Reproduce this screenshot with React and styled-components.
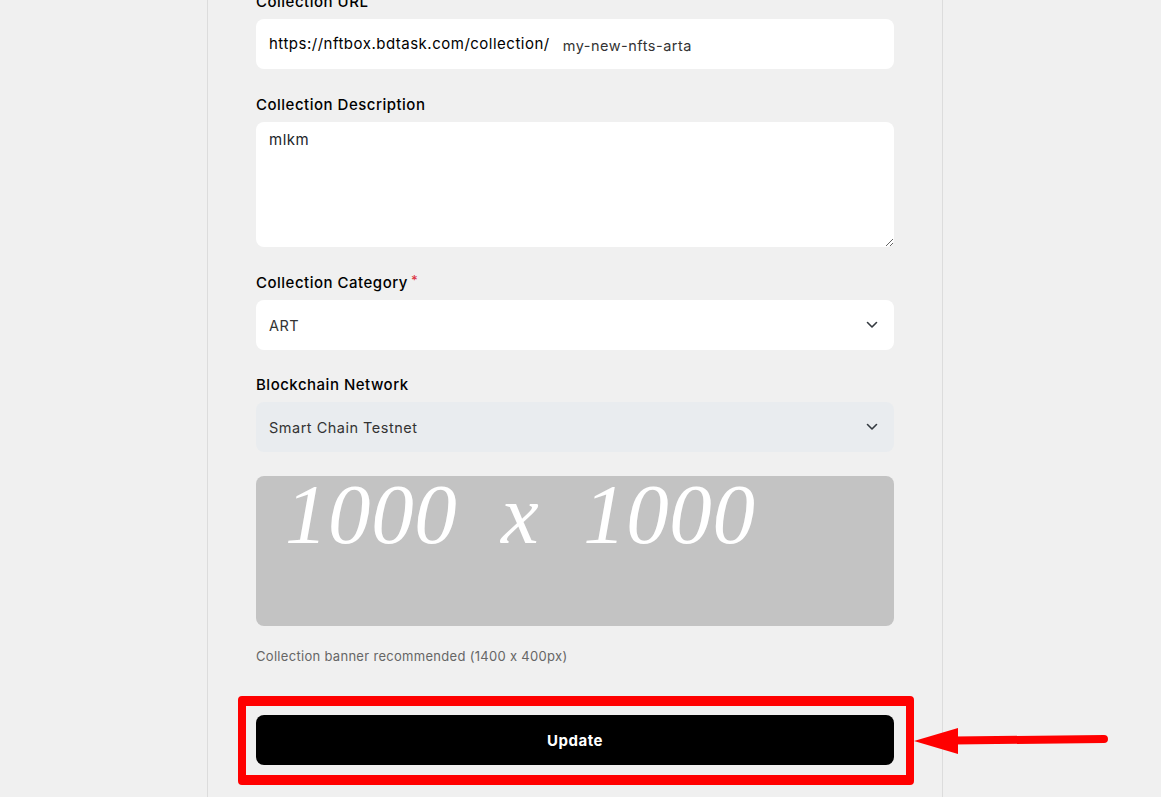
import React from 'react';
import styled, { createGlobalStyle } from 'styled-components';

const GlobalStyle = createGlobalStyle`
  html, body {
    margin: 0;
    padding: 0;
    background: #f0f0f0;
    overflow: hidden;
  }
  body {
    font-family: Inter, "Open Sans", "Liberation Sans", sans-serif;
    font-feature-settings: "calt" 0;
    letter-spacing: 0.5px;
    color: #000;
  }
`;

const Page = styled.div`
  min-height: 100vh;
  padding-left: 207px;
`;

const Panel = styled.div`
  display: flow-root;
  width: 736px;
  min-height: 100vh;
  border-left: 1px solid #dcdcdc;
  border-right: 1px solid #dcdcdc;
  padding: 0 48px;
  box-sizing: border-box;
`;

const Form = styled.form`
  margin-top: -10px;
  display: flex;
  flex-direction: column;
`;

const Group = styled.div`
  display: flex;
  flex-direction: column;
  margin-bottom: ${(p) => p.$gap || 24}px;
`;

const Label = styled.label`
  font-size: 15px;
  font-weight: 500;
  line-height: 24px;
  margin-bottom: 5px;
  color: #000;
`;

const Required = styled.span`
  color: #dc3545;
  font-size: 13px;
  margin-left: 3px;
  vertical-align: top;
  line-height: 18px;
`;

const Field = styled.div`
  height: 50px;
  background: ${(p) => (p.$disabled ? '#e9ecef' : '#fff')};
  border-radius: 8px;
  display: flex;
  align-items: center;
  padding: 0 16px 0 13px;
  box-sizing: border-box;
  font-size: 15px;
  color: #212529;
`;

const Prefix = styled.span`
  font-size: 15px;
  color: #000;
  margin-right: 13px;
  position: relative;
  top: -1px;
`;

const Value = styled.span`
  font-size: 14.5px;
  color: #333;
  flex: 1;
  position: relative;
  top: ${(p) => p.$shift || 0}px;
`;

const TextArea = styled.textarea`
  height: 125px;
  border: none;
  border-radius: 8px;
  background: #fff;
  padding: 8px 13px;
  box-sizing: border-box;
  font-family: inherit;
  letter-spacing: inherit;
  font-size: 15px;
  color: #212529;
  resize: vertical;
  outline: none;
`;

const Chevron = () => (
  <svg width="12" height="8" viewBox="0 0 12 8" fill="none">
    <path d="M1.5 1.5l4.5 4.5 4.5-4.5" stroke="#343a40" strokeWidth="1.6" strokeLinecap="round" strokeLinejoin="round" />
  </svg>
);

const Banner = styled.div`
  height: 150px;
  background: #c3c3c3;
  border-radius: 8px;
  padding-left: 29px;
`;

const BannerText = styled.div`
  font-family: "Liberation Serif", "DejaVu Serif", serif;
  font-style: italic;
  font-size: 85px;
  line-height: 76px;
  color: #fff;
  white-space: pre;
  letter-spacing: 0.6px;
`;

const Hint = styled.div`
  font-size: 13px;
  line-height: 20px;
  color: #666;
  letter-spacing: 0.3px;
  margin-top: 20px;
  margin-bottom: 30px;
`;

const HighlightWrap = styled.div`
  position: relative;
  margin-left: -18px;
  margin-right: -20px;
`;

const Highlight = styled.div`
  border: 8px solid #ff0000;
  border-top-width: 10px;
  border-bottom-width: 10px;
  border-radius: 4px;
  padding: 9px 12px 10px 10px;
`;

const Button = styled.button`
  width: 100%;
  height: 50px;
  border: none;
  border-radius: 8px;
  background: #000;
  color: #fff;
  font-family: inherit;
  letter-spacing: inherit;
  font-size: 15px;
  font-weight: 700;
  cursor: pointer;
`;

const Arrow = styled.svg`
  position: absolute;
  left: 100%;
  top: 50%;
  transform: translateY(-50%);
`;

export default function App() {
  return (
    <>
      <GlobalStyle />
      <Page>
        <Panel>
          <Form onSubmit={(e) => e.preventDefault()}>
            <Group>
              <Label>Collection URL</Label>
              <Field>
                <Prefix>https://nftbox.bdtask.com/collection/</Prefix>
                <Value $shift={1}>my-new-nfts-arta</Value>
              </Field>
            </Group>
            <Group>
              <Label>Collection Description</Label>
              <TextArea defaultValue="mlkm" />
            </Group>
            <Group $gap={23}>
              <Label>
                Collection Category<Required>*</Required>
              </Label>
              <Field>
                <Value>ART</Value>
                <Chevron />
              </Field>
            </Group>
            <Group>
              <Label>Blockchain Network</Label>
              <Field $disabled>
                <Value>Smart Chain Testnet</Value>
                <Chevron />
              </Field>
            </Group>
            <Banner>
              <BannerText>{'1000  x  1000'}</BannerText>
            </Banner>
            <Hint>Collection banner recommended (1400 x 400px)</Hint>
            <HighlightWrap>
              <Highlight>
                <Button type="submit">Update</Button>
              </Highlight>
              <Arrow width="200" height="30" viewBox="0 0 200 30">
                <polygon points="0,15 44,2 44,28" fill="#ff0000" />
                <path d="M40 14.5 L190 13" stroke="#ff0000" strokeWidth="8" strokeLinecap="round" />
              </Arrow>
            </HighlightWrap>
          </Form>
        </Panel>
      </Page>
    </>
  );
}
